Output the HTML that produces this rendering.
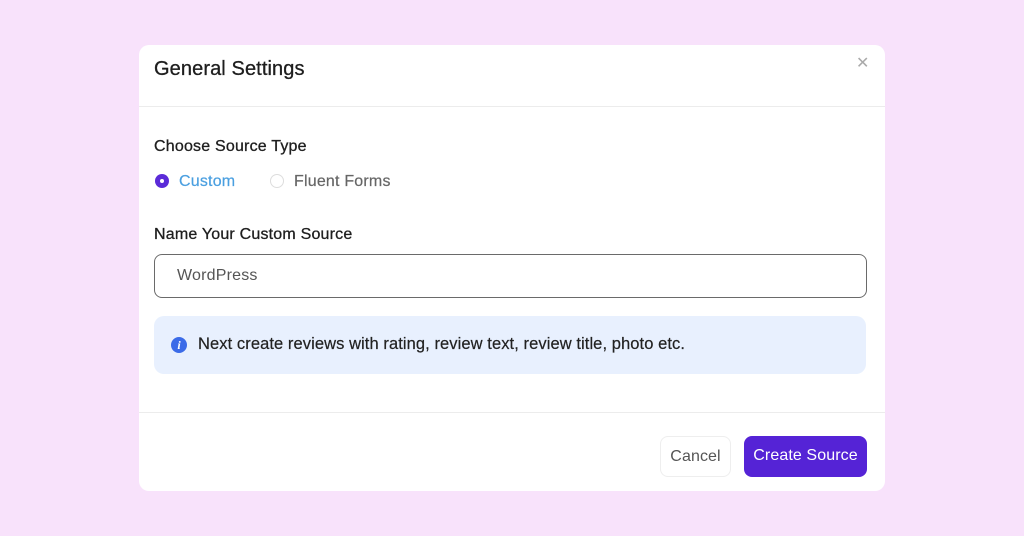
<!DOCTYPE html>
<html><head><style>
body{margin:0;width:1024px;height:536px;background:#f8e2fb;font-family:"Liberation Sans",sans-serif;position:relative;overflow:hidden}
.m{position:absolute;left:139px;top:45px;width:746px;height:446px;background:#fff;border-radius:10px}
.t{position:absolute;left:15px;top:13px;font-size:20px;color:#1e1e1e;letter-spacing:0.1px;-webkit-text-stroke:0.3px #1e1e1e}
.x{position:absolute;left:717px;top:8px;font-size:16px;color:#aaa;font-weight:normal}
.hr{position:absolute;left:0;right:0;height:1px;background:#ececec}
.l{position:absolute;left:15px;font-size:16px;color:#1e1e1e;letter-spacing:0.2px;-webkit-text-stroke:0.3px #1e1e1e}
.r{position:absolute;top:129px;width:14px;height:14px;border-radius:50%}
.in{position:absolute;left:15px;top:209px;width:713px;height:44px;border:1px solid #6a6a6a;border-radius:8px;box-sizing:border-box;font-size:16px;color:#555;padding:12px 22px;letter-spacing:0.2px}
.info{position:absolute;left:15px;top:271px;width:712px;height:58px;background:#e8f0fe;border-radius:10px}
.b{position:absolute;top:391px;height:41px;border-radius:8px;font-size:16px;box-sizing:border-box;padding:11px 0;text-align:center;letter-spacing:0.1px}
</style></head><body>
<div class="m">
<div class="t">General Settings</div>
<div class="x">✕</div>
<div class="hr" style="top:61px"></div>
<div class="l" style="top:93px">Choose Source Type</div>
<div class="r" style="left:16px;background:#5b2bd8"><div style="position:absolute;left:5px;top:5px;width:4px;height:4px;background:#fff;border-radius:50%"></div></div>
<div class="l" style="left:40px;top:128px;color:#4a9fe0;-webkit-text-stroke:0.2px #4a9fe0">Custom</div>
<div class="r" style="left:131px;border:1px solid #ddd;box-sizing:border-box"></div>
<div class="l" style="left:155px;top:128px;color:#666;-webkit-text-stroke:0.2px #666">Fluent Forms</div>
<div class="l" style="top:181px">Name Your Custom Source</div>
<div class="in">WordPress</div>
<div class="info">
<div style="position:absolute;left:17px;top:21px;width:16px;height:16px;border-radius:50%;background:#3b6be8;color:#fff;font-size:12px;font-style:italic;font-weight:bold;text-align:center;line-height:16px;font-family:'Liberation Serif',serif">i</div>
<div style="position:absolute;left:44px;top:19px;font-size:16.5px;color:#222;letter-spacing:0.08px;-webkit-text-stroke:0.2px #222">Next create reviews with rating, review text, review title, photo etc.</div>
</div>
<div class="hr" style="top:367px"></div>
<div class="b" style="left:521px;width:71px;border:1px solid #eee;color:#555">Cancel</div>
<div class="b" style="left:605px;width:123px;background:#5523d6;color:#fff">Create Source</div>
</div>
</body></html>
